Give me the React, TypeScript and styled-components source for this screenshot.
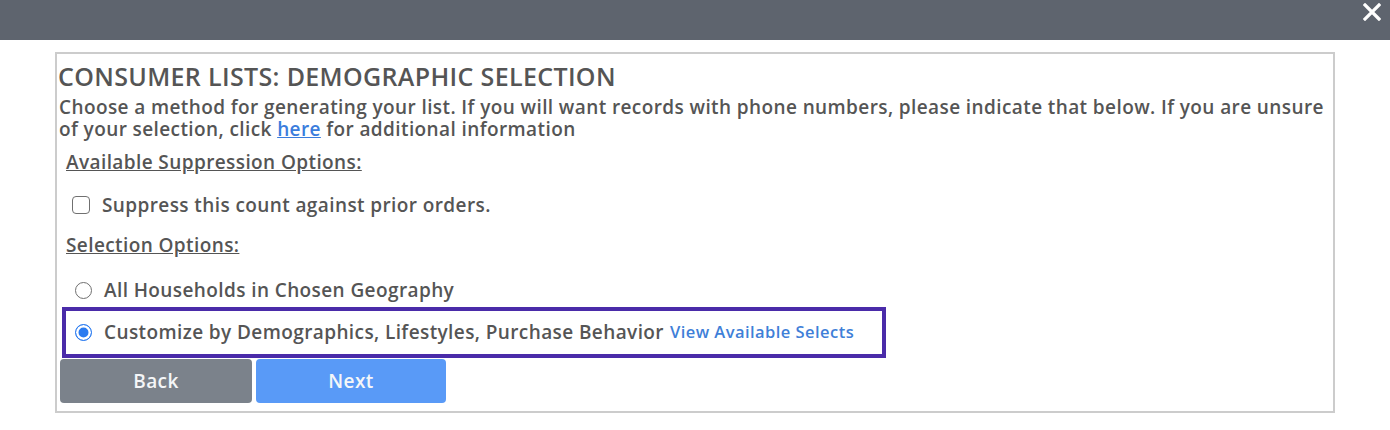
import React from "react";
import styled, { createGlobalStyle } from "styled-components";

const Global = createGlobalStyle`
  body {
    margin: 0;
    background: #fff;
    font-family: "Open Sans", "Noto Sans", sans-serif;
    color: #555;
  }
`;
const TopBar = styled.div`
  height: 40px;
  background-color: #5e646e;
  display: flex;
  justify-content: flex-end;
  align-items: flex-start;
  padding: 3px 9px 0 0;
  box-sizing: border-box;
`;
const CloseButton = styled.button`
  border: none;
  background: none;
  padding: 0;
  width: 18px;
  height: 18px;
  cursor: pointer;
  display: flex;
`;
const Panel = styled.div`
  margin: 12px 0 0 55px;
  width: 1280px;
  box-sizing: border-box;
  border: 2px solid #cccccc;
  padding: 7px 2px 8px 2px;
  display: flex;
  flex-direction: column;
`;
const Title = styled.h1`
  margin: 0 0 0 -1px;
  font-size: 25px;
  line-height: 30px;
  font-weight: 600;
  letter-spacing: 0.35px;
  color: #555;
`;
const Text = styled.p`
  margin: 5px 0 0;
  font-size: 19px;
  line-height: 22px;
  font-weight: 600;
  letter-spacing: 0.4px;
`;
const TextLink = styled.a`
  color: #3b7ddd;
  text-decoration: underline;
`;
const Heading = styled.div<{ $top: number }>`
  margin: ${(p) => p.$top}px 0 0 7px;
  font-size: 19px;
  line-height: 22px;
  font-weight: 600;
  letter-spacing: 0.4px;
  text-decoration: underline;
`;
const OptionRow = styled.label<{ $top: number }>`
  display: flex;
  align-items: center;
  margin-top: ${(p) => p.$top}px;
  font-size: 19px;
  line-height: 22px;
  font-weight: 600;
  letter-spacing: 0.4px;
  padding-left: 13px;
`;
const SelectedRow = styled(OptionRow)`
  align-self: flex-start;
  margin-left: 3px;
  width: 824px;
  box-sizing: border-box;
  padding: 10px 0 11px 6px;
  border: 4px solid #4a2ba9;
`;
const Checkbox = styled.span`
  width: 18px;
  height: 18px;
  box-sizing: border-box;
  border: 1.5px solid #707070;
  border-radius: 4px;
  margin-right: 12px;
  flex-shrink: 0;
`;
const Radio = styled.span<{ $checked?: boolean }>`
  width: 17px;
  height: 17px;
  box-sizing: border-box;
  border-radius: 50%;
  border: 1.5px solid ${(p) => (p.$checked ? "#2a7bf0" : "#707070")};
  background: ${(p) => (p.$checked ? "#2a7bf0" : "#fff")};
  box-shadow: ${(p) => (p.$checked ? "inset 0 0 0 2.5px #fff" : "none")};
  margin: 0 12px 0 3px;
  flex-shrink: 0;
`;
const SmallLink = styled.a`
  color: #3f7fd8;
  font-size: 16.5px;
  font-weight: 600;
  letter-spacing: 0.45px;
  margin-left: 6px;
  text-decoration: none;
`;
const Buttons = styled.div`
  display: flex;
  gap: 4px;
  margin: 1px 0 0 1px;
`;
const Button = styled.button<{ $variant: "back" | "next" }>`
  width: ${(p) => (p.$variant === "back" ? 192 : 190)}px;
  height: 44px;
  border: none;
  border-radius: 4px;
  background-color: ${(p) => (p.$variant === "back" ? "#7b828b" : "#599af7")};
  color: #f4f6f8;
  font-family: "Open Sans", sans-serif;
  font-size: 19px;
  font-weight: 600;
  letter-spacing: 0.4px;
  cursor: pointer;
`;

export default function App() {
  return (
    <>
      <Global />
      <TopBar>
        <CloseButton aria-label="Close">
          <svg width="18" height="18" viewBox="0 0 18 18">
            <path
              d="M2 2 L16 16 M16 2 L2 16"
              stroke="#fff"
              strokeWidth="3.2"
              strokeLinecap="square"
            />
          </svg>
        </CloseButton>
      </TopBar>
      <Panel>
        <Title>CONSUMER LISTS: DEMOGRAPHIC SELECTION</Title>
        <Text>
          Choose a method for generating your list. If you will want records
          with phone numbers, please indicate that below. If you are unsure of
          your selection, click <TextLink href="#">here</TextLink> for
          additional information
        </Text>
        <Heading $top={11}>Available Suppression Options:</Heading>
        <OptionRow $top={21}>
          <Checkbox />
          Suppress this count against prior orders.
        </OptionRow>
        <Heading $top={18}>Selection Options:</Heading>
        <OptionRow $top={23}>
          <Radio />
          All Households in Chosen Geography
        </OptionRow>
        <SelectedRow $top={6}>
          <Radio $checked />
          Customize by Demographics, Lifestyles, Purchase Behavior
          <SmallLink href="#">View Available Selects</SmallLink>
        </SelectedRow>
        <Buttons>
          <Button $variant="back">Back</Button>
          <Button $variant="next">Next</Button>
        </Buttons>
      </Panel>
    </>
  );
}
